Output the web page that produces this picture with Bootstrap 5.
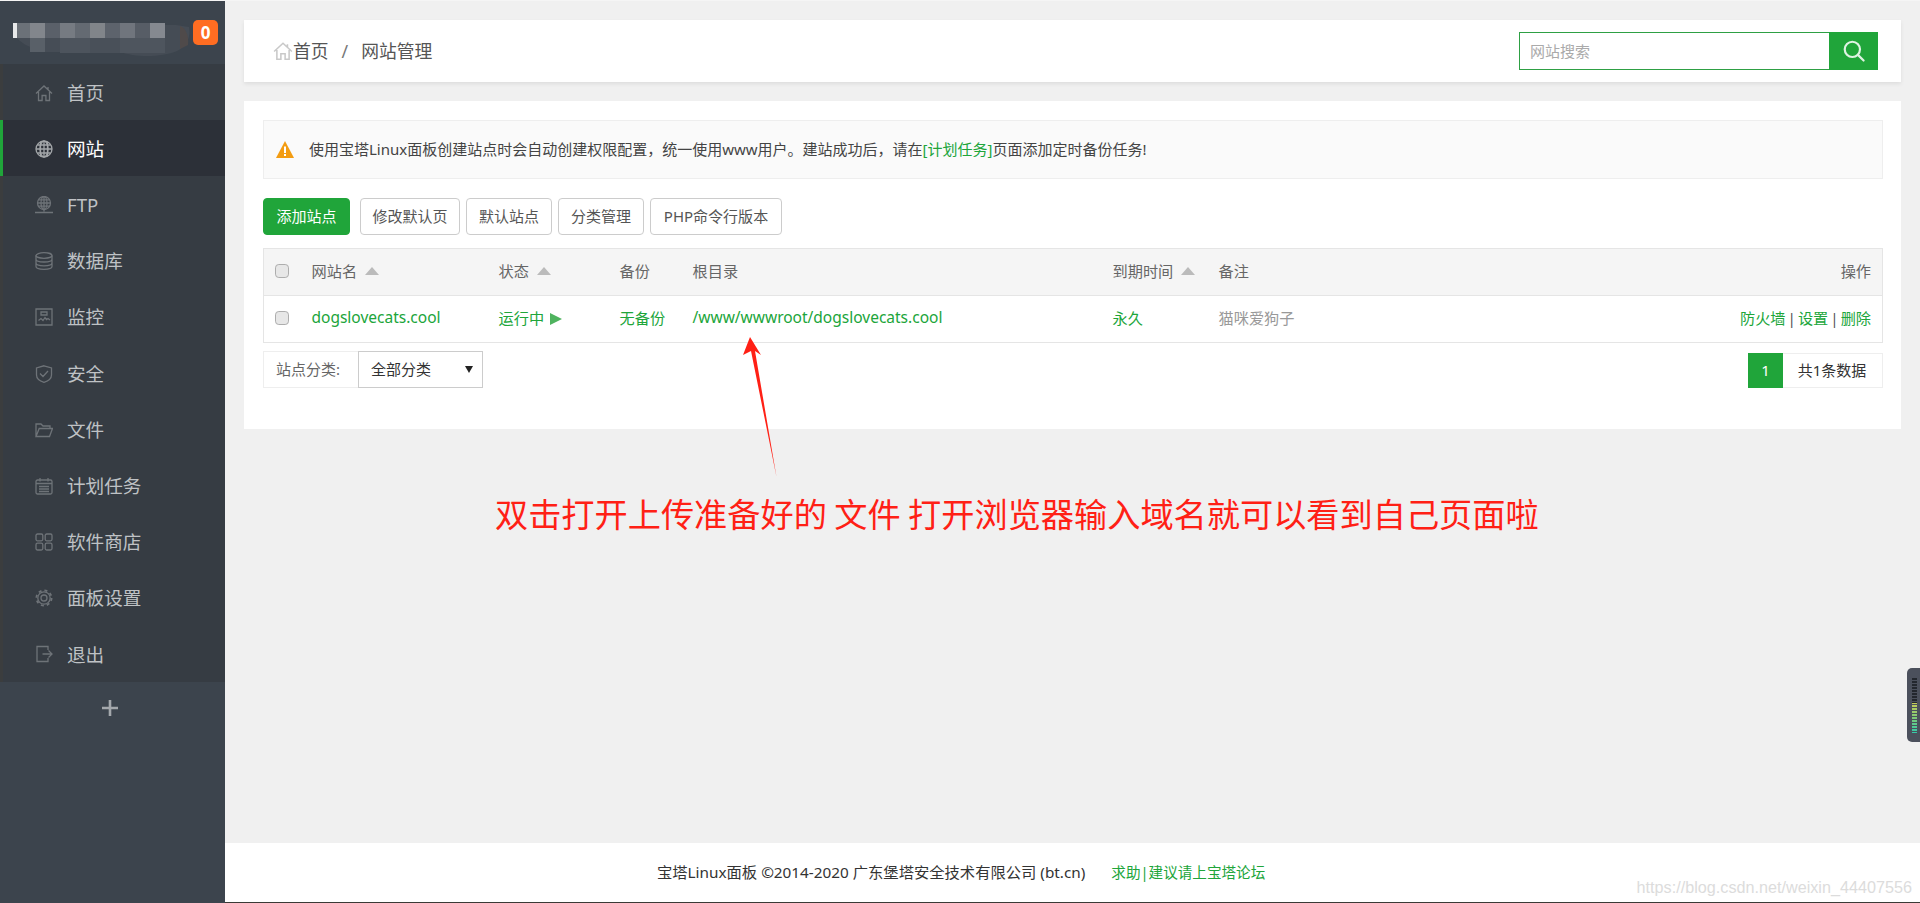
<!DOCTYPE html>
<html lang="zh-CN">
<head>
  <meta charset="UTF-8">
  <title>网站管理 - 宝塔Linux面板</title>
  <meta name="viewport" content="width=device-width, initial-scale=1">
  <link href="https://cdn.jsdelivr.net/npm/bootstrap@5.3.0/dist/css/bootstrap.min.css" rel="stylesheet">
  <style>
    html, body { height: 100%; overflow: hidden; }
    body {
      background-color: #f0f0f0;
      color: #555;
      font-family: "Noto Sans", "Noto Sans CJK SC", sans-serif;
      font-size: 15px;
      border-top: 1px solid #f5f5f5;
    }
    a { color: #20a53a; text-decoration: none; }

    /* sidebar */
    .sidebar { width: 225px; background: #3c444d; }
    .side-head { height: 63px; }
    .side-head svg { display: block; }
    .count-badge {
      top: 19px; left: 193px; width: 25px; height: 25px;
      background: #ff6d22; color: #fff; font-size: 17px; font-weight: 700;
      border-radius: 5px;
    }
    .side-menu { background: #363c43; }
    .side-menu .nav-link {
      height: 56.2px;
      padding: 1px 0 0 32px;
      gap: 14px;
      color: #bfc2c5;
      font-size: 18.6px;
      border-left: 3px solid #3b3d3e;
    }
    .side-menu .nav-link svg { width: 18px; height: 18px; flex: none; fill: none; stroke: #6e7378; stroke-width: 1.3; }
    .side-menu .nav-link.active { background: #2c3038; color: #fff; border-left-color: #20a53a; }
    .side-menu .nav-link.active svg { stroke: #a3a6a9; }
    .side-add { height: 52px; padding-right: 6px; }
    .side-add svg { width: 16px; height: 16px; stroke: #a4a8ac; stroke-width: 2.6; }

    /* main column */
    .page-wrap { padding: 19px 19px 0 19px; }
    .crumb-bar {
      height: 62px;
      padding: 0 23px 0 29px;
      box-shadow: 0 2px 4px rgba(0, 0, 0, .08);
    }
    .crumb-bar .breadcrumb { font-size: 17.8px; color: #555; }
    .crumb-bar .breadcrumb-item + .breadcrumb-item { padding-left: 13px; }
    .crumb-bar .breadcrumb-item + .breadcrumb-item::before { padding-right: 13px; color: #777; }
    .crumb-bar .breadcrumb-item a { color: #555; }
    .crumb-bar svg { width: 20px; height: 20px; fill: none; stroke: #c9c9c9; stroke-width: 1.4; vertical-align: -3px; }
    .search-box { width: 359px; height: 38px; }
    .search-box .form-control {
      height: 38px; border: 1px solid #2ea044; border-radius: 0;
      font-size: 15px; padding-left: 10px; box-shadow: none;
    }
    .search-box .form-control::placeholder { color: #aaa; }
    .search-box .btn {
      width: 49px; height: 38px; padding: 0; border: 0; border-radius: 0;
      background: #20a53a;
    }
    .search-box svg { width: 24px; height: 24px; fill: none; stroke: #dff3e3; stroke-width: 2; }

    .content-card { margin-top: 19px; padding: 19px 18px 0 19px; height: 328px; }
    .tip-bar {
      height: 59px; padding: 0 0 0 12px; gap: 15px;
      background: #fafafa; border: 1px solid #eee; color: #444;
      white-space: nowrap;
    }
    .tip-bar svg { width: 18px; height: 17px; flex: none; }
    .tool-row { margin-top: 19px; gap: 6px; }
    .tool-row .btn {
      height: 37px; padding: 0; font-size: 15px; line-height: 35px; white-space: nowrap;
      border: 1px solid #ccc; border-radius: 4px; color: #555; background: #fff;
    }
    .tool-row .btn-success { width: 87px; margin-right: 4px; background: #20a53a; border-color: #20a53a; color: #fff; }
    .tool-row .btn:nth-child(2) { width: 100px; }
    .tool-row .btn:nth-child(3), .tool-row .btn:nth-child(4) { width: 86px; }
    .tool-row .btn:nth-child(5) { width: 132px; }

    .site-table { margin: 13px 0 0; table-layout: fixed; border: 1px solid #e5e5e5; font-size: 15.2px; }
    .site-table > :not(caption) > * > * { padding: 0 0 2px 12px; vertical-align: middle; border-bottom: 1px solid #e5e5e5; box-shadow: none; color: inherit; background: transparent; }
    .site-table thead tr { height: 47px; background: #f5f5f5; color: #666; }
    .site-table tbody tr { height: 47px; color: #20a53a; }
    .site-table th { font-weight: 400; }
    .site-table .c-check { width: 36px; padding-left: 11px; }
    .site-table .c-name { width: 187px; }
    .site-table .c-state { width: 121px; }
    .site-table .c-bak { width: 73px; }
    .site-table .c-path { width: 420px; }
    .site-table .c-end { width: 106px; }
    .site-table .c-note { width: 350px; }
    .site-table .c-act { padding-right: 11px; text-align: right; }
    .site-table .note { color: #999; }
    .site-table .sep { color: #555; margin: 0 2px; }
    .site-table .latin { font-size: 15.5px; }
    .chk {
      width: 14px; height: 14px; margin: 0; display: block; float: none;
      background-color: #e7e7e7; border: 1px solid #adadad; border-radius: 3px;
    }
    .sort-up {
      display: inline-block; width: 0; height: 0; margin-left: 9px; vertical-align: 2px;
      border-left: 7.5px solid transparent; border-right: 7.5px solid transparent; border-bottom: 8px solid #bbb;
    }
    .play {
      display: inline-block; width: 0; height: 0; margin-left: 6px; vertical-align: -1px;
      border-top: 6.5px solid transparent; border-bottom: 6.5px solid transparent; border-left: 12px solid #4fb35f;
    }
    .list-foot { margin-top: 8px; }
    .cate-box { height: 37px; }
    .cate-box .input-group-text {
      width: 96px; padding: 0 0 0 12px; background: #fff; color: #666; font-size: 15px;
      border: 1px solid #eee; border-right: 0; border-radius: 0;
    }
    .cate-box .form-select {
      width: 125px; flex: none; height: 37px; padding: 0 0 0 12px; font-size: 15px; color: #333;
      border: 1px solid #ccc; border-radius: 0; box-shadow: none;
      background-image: url("data:image/svg+xml,%3csvg xmlns='http://www.w3.org/2000/svg' viewBox='0 0 8 7'%3e%3cpath fill='%23222' d='M0 0h8L4 7z'/%3e%3c/svg%3e");
      background-size: 8px 7px; background-position: right 9px center;
    }
    .pager { margin-top: 2px; --bs-pagination-border-radius: 0; }
    .pager .page-link {
      height: 35px; line-height: 33px; padding: 0; font-size: 15px; color: #333; border: 1px solid #eee;
      background: #fff;
    }
    .pager .page-item .page-link { border-radius: 0; }
    .pager .active .page-link { width: 35px; text-align: center; background: #20a53a; border-color: #20a53a; color: #fff; }
    .pager .total { width: 101px; text-align: center; border-left: 0; }

    .page-foot { height: 60px; color: #333; font-size: 15.3px; padding-left: 432px; gap: 26px; border-bottom: 1px solid #3a3a36; }
    .page-foot a { font-size: 14.6px; }

    /* things lying over the page: annotation and overlays */
    .note-arrow { left: 0; top: 0; width: 1920px; height: 903px; pointer-events: none; }
    .note-text {
      left: 495px; top: 491px; color: #ff2015; font-size: 33.2px; line-height: 44px; white-space: nowrap;
      font-family: "Noto Sans CJK SC", sans-serif;
    }
    .watermark {
      right: 8px; top: 875px; color: #dcdcdc; font-size: 16.2px; white-space: nowrap;
      font-family: "Liberation Sans", sans-serif;
    }
    .meter {
      right: 0; top: 668px; width: 13px; height: 74px; background: #4b505c;
      border-radius: 5px 0 0 5px; padding: 9px 3px 9px 5px;
    }
    .meter div {
      height: 100%;
      background:
        repeating-linear-gradient(#4b505c 0 1px, transparent 1px 3px),
        linear-gradient(#23272e 0 46%, #c8cb58 46%, #7fca75 72%, #33c9a9 100%);
    }
  </style>
</head>
<body class="d-flex">
  <!-- Sidebar -->
  <aside class="sidebar d-flex flex-column flex-shrink-0 position-relative">
    <div class="side-head">
      <!-- the address in the screenshot is pixelated out -->
      <svg width="225" height="63" viewBox="0 0 225 63">
        <path d="M16 36c10 12 28 15 50 15h55c12 5 40 6 56-1 10-5 14-14 12-24l-13-2-150 0z" fill="#454c55"/>
        <path d="M180 25c6 2 9 10 8 19l-8 4z" fill="#4f4a4a"/>
        <g>
          <rect x="13" y="22" width="4" height="15" fill="#e8e9ea"/>
          <rect x="17" y="22" width="13" height="15" fill="#6b7178"/>
          <rect x="30" y="22" width="15" height="15" fill="#82868c"/>
          <rect x="45" y="22" width="15" height="15" fill="#5a6069"/>
          <rect x="60" y="22" width="15" height="15" fill="#767b82"/>
          <rect x="75" y="22" width="15" height="15" fill="#646a72"/>
          <rect x="90" y="22" width="15" height="15" fill="#81858a"/>
          <rect x="105" y="22" width="15" height="15" fill="#5d636c"/>
          <rect x="120" y="22" width="15" height="15" fill="#70757d"/>
          <rect x="135" y="22" width="15" height="15" fill="#575d66"/>
          <rect x="150" y="22" width="15" height="15" fill="#858990"/>
          <rect x="30" y="37" width="15" height="14" fill="#596068"/>
          <rect x="45" y="37" width="15" height="14" fill="#464d56"/>
          <rect x="60" y="37" width="30" height="15" fill="#4d545d"/>
          <rect x="90" y="37" width="30" height="15" fill="#495059"/>
          <rect x="120" y="37" width="45" height="15" fill="#4e555e"/>
        </g>
      </svg>
    </div>
    <span class="count-badge position-absolute d-flex align-items-center justify-content-center">0</span>
    <nav class="side-menu nav flex-column">
      <a class="nav-link d-flex align-items-center" href="#">
        <svg viewBox="0 0 18 18"><path d="M1 9.500 9 2l8 7.500M3.500 8v8.500h3.600v-5h3.800v5h3.600V8M13 3v2.500"/></svg>首页</a>
      <a class="nav-link active d-flex align-items-center" href="#">
        <svg viewBox="0 0 18 18"><circle cx="9" cy="9" r="8"/><ellipse cx="9" cy="9" rx="4" ry="8"/><path d="M1 9h16M2.300 5h13.400M2.300 13h13.400M9 1v16M5.500 1.800v14.400M12.500 1.800v14.400"/></svg>网站</a>
      <a class="nav-link d-flex align-items-center" href="#">
        <svg viewBox="0 0 18 18"><circle cx="9" cy="7" r="6.500"/><ellipse cx="9" cy="7" rx="3" ry="6.500"/><path d="M2.500 7h13M3.500 3.800h11M3.500 10.200h11M9 .5v13M9 13.500v2M0 16.500h18"/></svg>FTP</a>
      <a class="nav-link d-flex align-items-center" href="#">
        <svg viewBox="0 0 18 18"><ellipse cx="9" cy="3.500" rx="8" ry="2.800"/><path d="M1 3.500v11c0 1.600 3.600 2.800 8 2.800s8-1.200 8-2.800v-11M1 7.200c0 1.600 3.600 2.800 8 2.800s8-1.200 8-2.800M1 11c0 1.600 3.600 2.800 8 2.800s8-1.200 8-2.800"/></svg>数据库</a>
      <a class="nav-link d-flex align-items-center" href="#">
        <svg viewBox="0 0 18 18"><path d="M1 1h16v16H1zM3.500 12.500l2.500-2 2 2 2-3 1.500 2 1.500-1 2 1.500M6 4h6v3H6z"/></svg>监控</a>
      <a class="nav-link d-flex align-items-center" href="#">
        <svg viewBox="0 0 18 18"><path d="M9 .8 16.500 3v7c0 3.700-3.300 6-7.500 7.300C4.800 16 1.500 13.700 1.500 10V3zM5 8.500l3 3 5-5.500"/></svg>安全</a>
      <a class="nav-link d-flex align-items-center" href="#">
        <svg viewBox="0 0 18 18"><path d="M1 15.500V3h5l2 2h7v2.500M1 15.500h13.500L17.500 7.500H4.200z"/></svg>文件</a>
      <a class="nav-link d-flex align-items-center" href="#">
        <svg viewBox="0 0 18 18"><rect x="1" y="3" width="16" height="14" rx="1.500"/><path d="M1 6.500h16M5 1v3.500M13 1v3.500M4 9.500h10M4 12h10M4 14.500h10" /></svg>计划任务</a>
      <a class="nav-link d-flex align-items-center" href="#">
        <svg viewBox="0 0 18 18"><rect x="1" y="1" width="6.800" height="6.800" rx="1.500"/><rect x="10.200" y="1" width="6.800" height="6.800" rx="1.500"/><rect x="1" y="10.200" width="6.800" height="6.800" rx="1.500"/><rect x="10.200" y="10.200" width="6.800" height="6.800" rx="1.500"/></svg>软件商店</a>
      <a class="nav-link d-flex align-items-center" href="#">
        <svg viewBox="0 0 18 18"><circle cx="9" cy="9" r="3"/><circle cx="9" cy="9" r="6.200"/><circle cx="9" cy="9" r="7.600" stroke-width="1.800" stroke-dasharray="3 3"/></svg>面板设置</a>
      <a class="nav-link d-flex align-items-center" href="#">
        <svg viewBox="0 0 18 18"><path d="M13 5V1.500H2v15h11V13M7.500 9H17M13.500 5.500 17 9l-3.500 3.500"/></svg>退出</a>
    </nav>
    <div class="side-add d-flex align-items-center justify-content-center">
      <svg viewBox="0 0 16 16"><path d="M0 8h16M8 0v16"/></svg>
    </div>
  </aside>

  <!-- Main column -->
  <div class="flex-grow-1 d-flex flex-column">
    <main class="page-wrap flex-grow-1">
      <div class="crumb-bar bg-white d-flex align-items-center justify-content-between">
        <ol class="breadcrumb mb-0">
          <li class="breadcrumb-item"><a href="#"><svg viewBox="0 0 18 18"><path d="M1 9.500 9 2l8 7.500M3.500 8v8.500h3.600v-5h3.800v5h3.600V8M13 3v2.500"/></svg>首页</a></li>
          <li class="breadcrumb-item active text-reset">网站管理</li>
        </ol>
        <div class="search-box input-group flex-nowrap">
          <input class="form-control" type="text" placeholder="网站搜索">
          <button class="btn d-flex align-items-center justify-content-center" type="button">
            <svg viewBox="0 0 22 22"><circle cx="9.500" cy="9.500" r="7"/><path d="m14.800 14.800 5 5" stroke-linecap="round"/></svg>
          </button>
        </div>
      </div>

      <section class="content-card bg-white">
        <div class="tip-bar d-flex align-items-center">
          <svg viewBox="0 0 18 17"><path d="M9 0 18 17H0z" fill="#f39c12"/><rect x="8" y="5.500" width="2" height="6.500" fill="#fff"/><rect x="8" y="13" width="2" height="2" fill="#fff"/></svg>
          <span>使用宝塔Linux面板创建站点时会自动创建权限配置，统一使用www用户。建站成功后，请在<a href="#">[计划任务]</a>页面添加定时备份任务!</span>
        </div>

        <div class="tool-row d-flex">
          <button class="btn btn-success" type="button">添加站点</button>
          <button class="btn" type="button">修改默认页</button>
          <button class="btn" type="button">默认站点</button>
          <button class="btn" type="button">分类管理</button>
          <button class="btn" type="button">PHP命令行版本</button>
        </div>

        <table class="table site-table">
          <thead>
            <tr>
              <th class="c-check"><input class="chk form-check-input" type="checkbox"></th>
              <th class="c-name">网站名<span class="sort-up ms-2"></span></th>
              <th class="c-state">状态<span class="sort-up ms-2"></span></th>
              <th class="c-bak">备份</th>
              <th class="c-path">根目录</th>
              <th class="c-end">到期时间<span class="sort-up ms-2"></span></th>
              <th class="c-note">备注</th>
              <th class="c-act">操作</th>
            </tr>
          </thead>
          <tbody>
            <tr>
              <td class="c-check"><input class="chk form-check-input" type="checkbox"></td>
              <td><a class="latin" href="#">dogslovecats.cool</a></td>
              <td><a href="#">运行中<span class="play"></span></a></td>
              <td><a href="#">无备份</a></td>
              <td><a class="latin" href="#">/www/wwwroot/dogslovecats.cool</a></td>
              <td><a href="#">永久</a></td>
              <td class="note">猫咪爱狗子</td>
              <td class="c-act"><a href="#">防火墙</a><span class="sep">|</span><a href="#">设置</a><span class="sep">|</span><a href="#">删除</a></td>
            </tr>
          </tbody>
        </table>

        <div class="list-foot d-flex justify-content-between align-items-start">
          <div class="cate-box input-group flex-nowrap w-auto">
            <span class="input-group-text">站点分类:</span>
            <select class="form-select"><option>全部分类</option></select>
          </div>
          <ul class="pager pagination mb-0">
            <li class="page-item active"><span class="page-link">1</span></li>
            <li class="page-item"><span class="page-link total">共1条数据</span></li>
          </ul>
        </div>
      </section>
    </main>

    <footer class="page-foot bg-white d-flex align-items-center flex-shrink-0">
      <span>宝塔Linux面板 ©2014-2020 广东堡塔安全技术有限公司 (bt.cn)</span>
      <a href="#">求助|建议请上宝塔论坛</a>
    </footer>
  </div>

  <!-- red annotation drawn over the screenshot -->
  <svg class="note-arrow position-absolute" viewBox="0 0 1920 903">
    <path d="M750 337 761 355 755 351 776.500 477 751 351 743 355z" fill="#ff2015"/>
  </svg>
  <div class="note-text position-absolute">双击打开上传准备好的 文件 打开浏览器输入域名就可以看到自己页面啦</div>
  <div class="watermark position-absolute">https://blog.csdn.net/weixin_44407556</div>
  <div class="meter position-absolute"><div></div></div>

  <script src="https://cdn.jsdelivr.net/npm/bootstrap@5.3.0/dist/js/bootstrap.bundle.min.js"></script>
</body>
</html>
